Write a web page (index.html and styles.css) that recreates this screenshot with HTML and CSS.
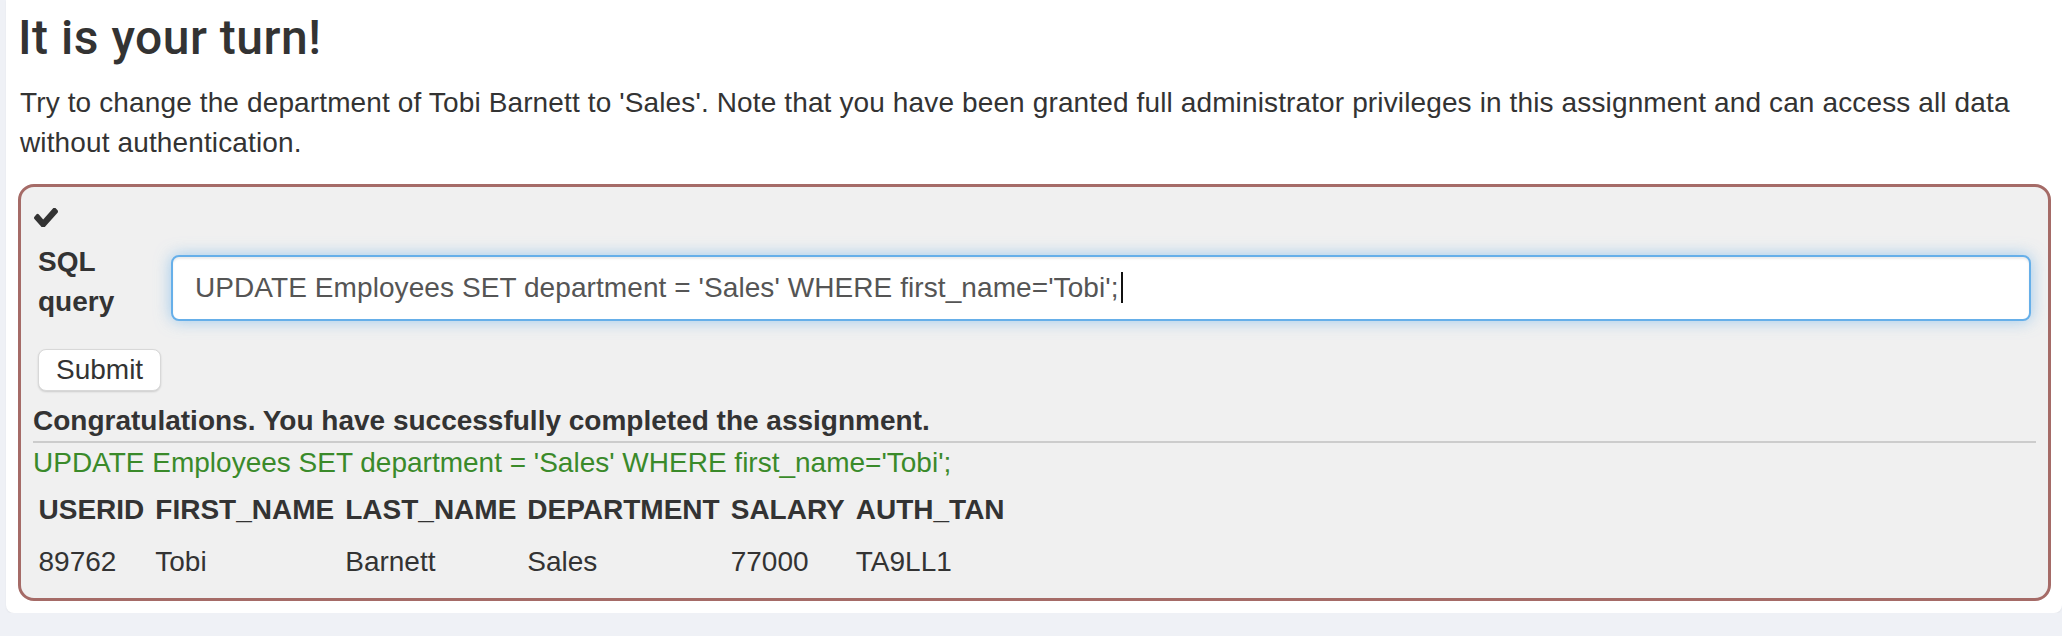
FILE: index.html
```html
<!DOCTYPE html>
<html lang="en">
<head>
<meta charset="utf-8">
<title>It is your turn!</title>
<link rel="stylesheet" href="styles.css">
</head>
<body>
<div class="card">
  <h3 class="title">It is your turn!</h3>
  <p class="intro">Try to change the department of Tobi Barnett to 'Sales'. Note that you have been granted full administrator privileges in this assignment and can access all data without authentication.</p>
  <div class="attack">
    <div class="status">
      <svg class="check" viewBox="121 362 1550 1092" preserveAspectRatio="none" aria-hidden="true"><path d="M1671 566q0 40-28 68l-724 724-136 136q-28 28-68 28t-68-28l-136-136-362-362q-28-28-28-68t28-68l136-136q28-28 68-28t68 28l294 295 656-657q28-28 68-28t68 28l136 136q28 28 28 68z"/></svg>
    </div>
    <form class="sql-form">
      <div class="form-row">
        <label class="sql-label">SQL query</label>
        <div class="sql-input"><span class="sql-value">UPDATE Employees SET department = 'Sales' WHERE first_name='Tobi';</span><span class="caret"></span></div>
      </div>
      <button class="btn-submit" type="button">Submit</button>
    </form>
    <div class="feedback">Congratulations. You have successfully completed the assignment.</div>
    <div class="output">
      <div class="query">UPDATE Employees SET department = 'Sales' WHERE first_name='Tobi';</div>
      <table class="result">
        <tr><th>USERID</th><th>FIRST_NAME</th><th>LAST_NAME</th><th>DEPARTMENT</th><th>SALARY</th><th>AUTH_TAN</th></tr>
        <tr><td>89762</td><td>Tobi</td><td>Barnett</td><td>Sales</td><td>77000</td><td>TA9LL1</td></tr>
      </table>
    </div>
  </div>
</div>
</body>
</html>
```

FILE: styles.css
```css
* { box-sizing: border-box; }

html, body {
  margin: 0;
  padding: 0;
}

body {
  background: #eff1f6;
  font-family: "Liberation Sans", Arial, sans-serif;
  font-size: 28px;
  line-height: 40px;
  color: #333;
}

.card {
  margin-left: 6px;
  background: #fff;
  border-radius: 0 0 8px 8px;
  padding: 12px 11px 12px 12px;
  box-shadow: 0 1px 2px rgba(0, 0, 0, 0.05);
}

.title {
  margin: 0 0 18px 0;
  font-family: Roboto, "Liberation Sans", sans-serif;
  font-weight: 500;
  font-size: 48px;
  line-height: 52.8px;
  letter-spacing: 0.5px;
  color: #333;
}

.intro {
  margin: 0 0 21px 2px;
  letter-spacing: 0.13px;
}

.attack {
  background: #f0f0f0;
  border: 3px solid #a56b67;
  border-radius: 16px;
  padding: 11px 12px 10px 12px;
}

.status {
  height: 40px;
  display: flex;
  align-items: center;
  padding-left: 1px;
}

.check {
  width: 24px;
  height: 19px;
  fill: #333;
  display: block;
}

.sql-form {
  margin: 4px 0 0 0;
}

.form-row {
  display: flex;
  align-items: flex-start;
}

.sql-label {
  flex: 0 0 138px;
  padding: 0 30px 0 5px;
  font-weight: bold;
}

.sql-input {
  flex: 1;
  margin: 13px 5px 0 0;
  height: 66px;
  background: #fff;
  border: 2px solid #66afe9;
  border-radius: 8px;
  padding: 0 22px;
  display: flex;
  align-items: center;
  color: #555;
  letter-spacing: 0.08px;
  box-shadow: inset 0 2px 2px rgba(0, 0, 0, 0.075), 0 0 16px rgba(102, 175, 233, 0.6);
  white-space: nowrap;
}

.caret {
  display: inline-block;
  width: 2px;
  height: 31px;
  background: #111;
  margin-left: 2px;
}

.btn-submit {
  display: block;
  margin: 27px 0 0 5px;
  font-family: "Liberation Sans", Arial, sans-serif;
  font-size: 28px;
  line-height: 32px;
  padding: 4px 17px;
  color: #333;
  background: #fff;
  border: 1px solid #d8d8d8;
  border-radius: 8px;
  box-shadow: 0 1px 2px rgba(0, 0, 0, 0.15);
}

.feedback {
  margin-top: 10px;
  font-weight: bold;
  border-bottom: 2px solid #cccccc;
}

.query {
  color: #3a8a2a;
}

.result {
  border-collapse: collapse;
  margin-top: 0;
}

.result th,
.result td {
  padding: 6px 5.5px 6px 5.5px;
  text-align: left;
  white-space: nowrap;
}

.result th {
  font-weight: bold;
  padding-top: 7px;
}
```
